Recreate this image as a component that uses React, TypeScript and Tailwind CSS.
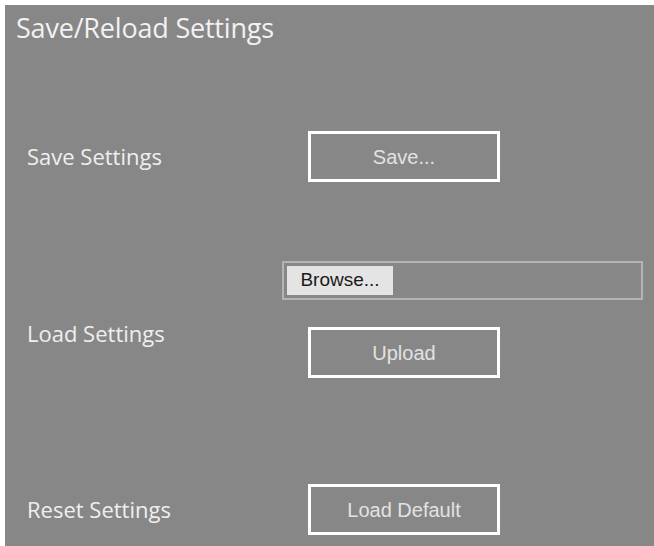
import React from "react";

const label = "text-[22px] text-[#efefef] font-['Open_Sans',sans-serif]";
const outlineBtn =
  "w-[192px] h-[51px] border-[3px] border-white text-[20px] text-[#e2e2e2] font-['Liberation_Sans',Arial,sans-serif] flex items-center justify-center";

export default function App() {
  return (
    <div className="w-[654px] h-[546px] bg-white pl-[5px] pt-[5px]">
      <div className="w-full h-full bg-[#878787] flex flex-col">
        <h1 className="pl-[11px] pt-[7px] text-[27px] leading-[32px] text-[#f2f2f2] font-['Open_Sans',sans-serif] tracking-[-0.2px]">
          Save/Reload Settings
        </h1>

        {/* save */}
        <div className="flex items-center mt-[87px]">
          <div className="w-[303px] pl-[22px]">
            <span className={label}>Save Settings</span>
          </div>
          <button className={outlineBtn}>Save...</button>
        </div>

        {/* load */}
        <div className="flex mt-[79px]">
          <div className="w-[277px] pl-[22px] pt-[56px]">
            <span className={label}>Load Settings</span>
          </div>
          <div className="flex flex-col">
            <div className="w-[361px] h-[39px] border-2 border-[#b4b4b4] p-[3px]">
              <button className="h-full w-[106px] bg-[#e4e4e4] text-[19px] text-[#1a1a1a] font-['Liberation_Sans',Arial,sans-serif] flex items-center justify-center">
                Browse...
              </button>
            </div>
            <button className={`${outlineBtn} ml-[26px] mt-[27px]`}>Upload</button>
          </div>
        </div>

        {/* reset */}
        <div className="flex items-center mt-[106px]">
          <div className="w-[303px] pl-[22px]">
            <span className={label}>Reset Settings</span>
          </div>
          <button className={outlineBtn}>Load Default</button>
        </div>
      </div>
    </div>
  );
}
